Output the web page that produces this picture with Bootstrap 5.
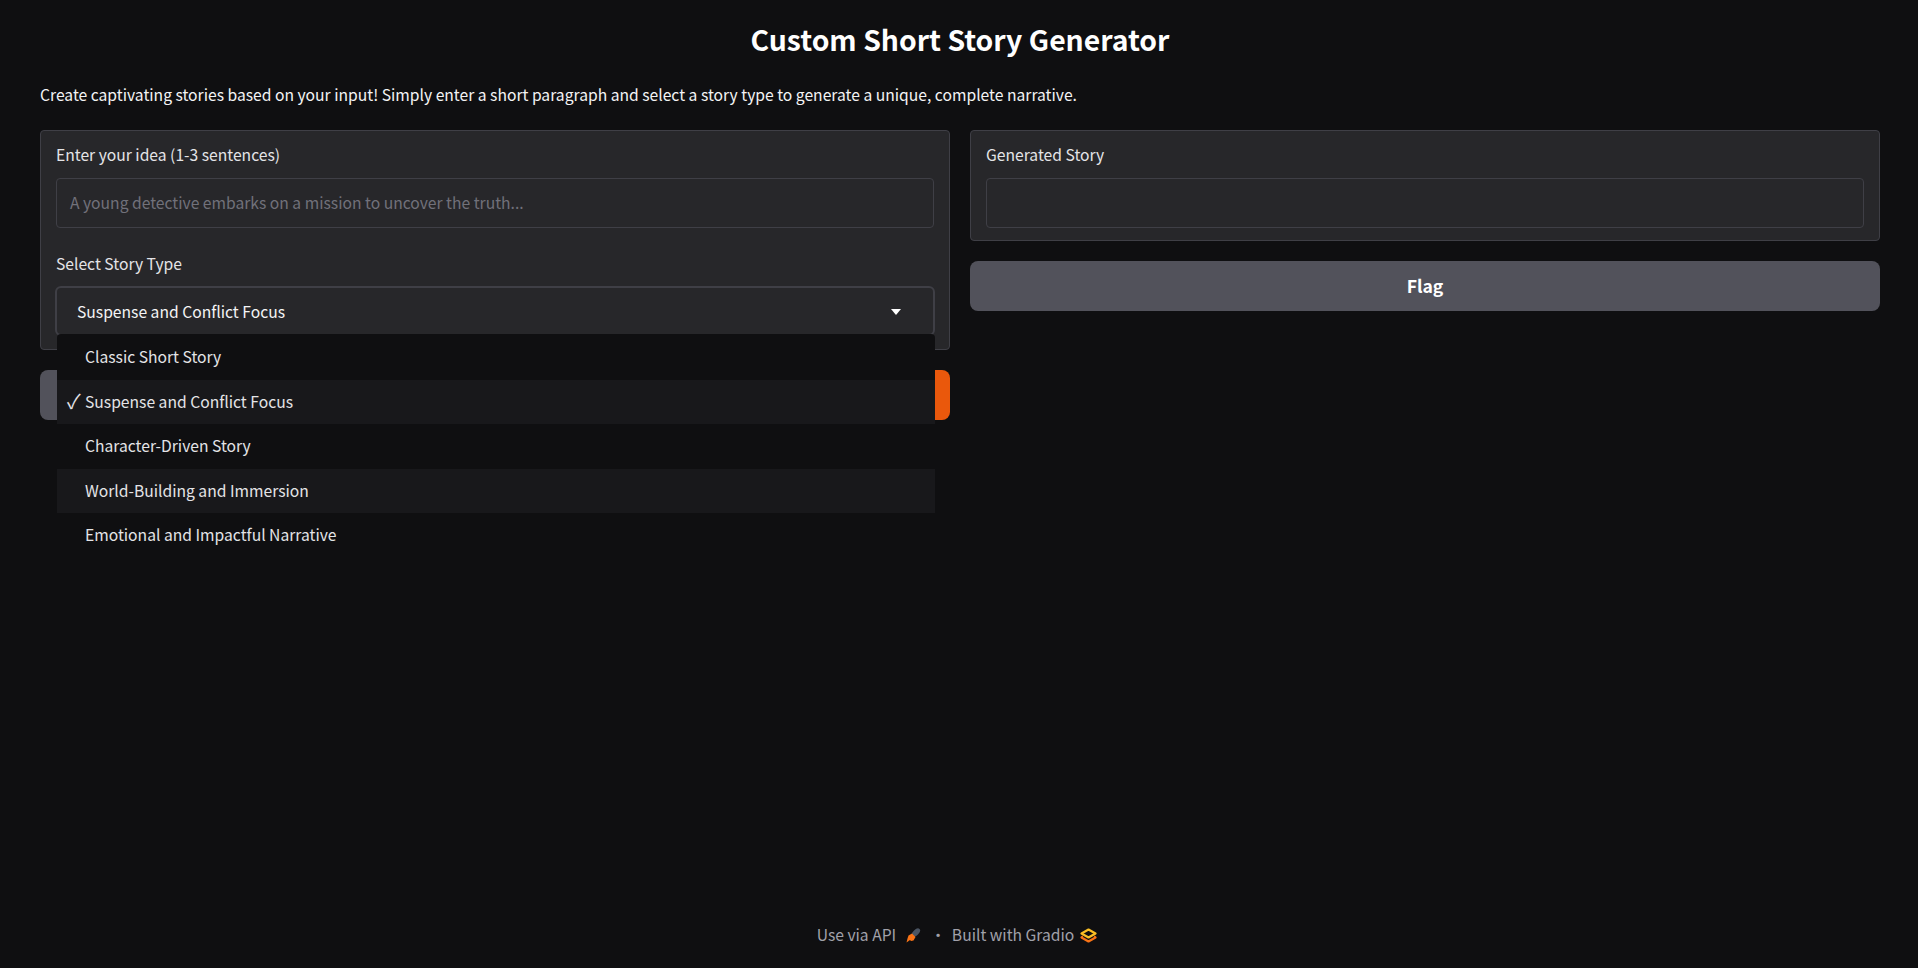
<!DOCTYPE html>
<html lang="en"><head><meta charset="utf-8"><title>Custom Short Story Generator</title>
<link href="https://cdn.jsdelivr.net/npm/bootstrap@5.3.0/dist/css/bootstrap.min.css" rel="stylesheet">
<style>
html,body{height:100%}
body{background:#0f0f11;color:#f4f4f5;font-family:"Noto Sans CJK SC","Source Sans Pro","Open Sans",sans-serif;font-size:15.67px;line-height:22px;overflow:hidden}
.app-shell{height:968px;padding:19px 38px 0 40px}
.app-title{font-size:28.35px;line-height:40px;font-weight:600;color:#fff;margin:0;text-align:center}
.app-desc{margin:24px 0 0;line-height:24px;color:#f4f4f5}
.cols{gap:20px;margin-top:23px}
.col-half{flex:1 1 0;min-width:0;gap:20px}
.panel{background:#27272a;border:1px solid #3f3f46;border-radius:4px;padding:0 15px}
.panel-left{height:220px;position:relative}
.panel-right{height:111px}
.fld-label{color:#e4e4e7;line-height:22px;margin-top:13px;margin-bottom:12px;display:block}
.fld-input{height:50px;background:#27272a;border:1px solid #3f3f46;border-radius:4px;padding:0 13px;line-height:48px;color:#71717a}
.sel-label{margin-top:25px;margin-bottom:11px}
.sel-box{height:50px;margin:0 -1px;border:2px solid #3f3f46;border-radius:6px;padding:2px 20px 0;color:#f4f4f5;line-height:22px}
.caret-tri{width:0;height:0;border-left:5.500px solid transparent;border-right:5.500px solid transparent;border-top:6px solid #fff;margin-right:12px}
.dd-menu{position:absolute;left:57px;top:334px;width:878px;background:#0f0f11;border-radius:4px 4px 0 0;z-index:5;list-style:none;margin:0;padding:1px 0 0}
.dd-menu li{height:44.6px;line-height:22px;padding:11px 0 0 28px;position:relative;color:#e4e4e7}
.dd-menu li.alt{background:#18181b}
.dd-check{position:absolute;left:10px;top:10px;font-size:20px}
.btn-pair{gap:16px}
.g-btn{height:50px;border:0;border-radius:8px;font-weight:600;font-size:17.6px;color:#fff;line-height:50px;padding:0;width:100%}
.g-btn:hover{color:#fff}
.g-gray,.g-gray:hover{background:#52525b}
.g-orange,.g-orange:hover{background:#ea580c}
.foot{position:absolute;left:0;right:4px;top:924px;color:#a1a1aa;line-height:22px}
.foot svg{display:block}
.foot-rocket{margin-left:9px}
.foot-dot{margin:0 6px 0 9px}
.foot-logo{margin-left:6px}
</style></head>
<body>
<div class="app-shell position-relative">
<h1 class="app-title">Custom Short Story Generator</h1>
<p class="app-desc">Create captivating stories based on your input! Simply enter a short paragraph and select a story type to generate a unique, complete narrative.</p>
<div class="d-flex cols">
  <div class="col-half d-flex flex-column">
    <div class="panel panel-left">
      <label class="fld-label">Enter your idea (1-3 sentences)</label>
      <div class="fld-input">A young detective embarks on a mission to uncover the truth...</div>
      <label class="fld-label sel-label">Select Story Type</label>
      <div class="sel-box d-flex align-items-center justify-content-between"><span>Suspense and Conflict Focus</span><span class="caret-tri"></span></div>
    </div>
    <div class="d-flex btn-pair">
      <button class="btn g-btn g-gray" aria-label="Clear"></button>
      <button class="btn g-btn g-orange" aria-label="Submit"></button>
    </div>
  </div>
  <div class="col-half d-flex flex-column">
    <div class="panel panel-right">
      <label class="fld-label">Generated Story</label>
      <div class="fld-input"></div>
    </div>
    <button class="btn g-btn g-gray">Flag</button>
  </div>
</div>
<ul class="dd-menu">
  <li>Classic Short Story</li>
  <li class="alt"><span class="dd-check">✓</span>Suspense and Conflict Focus</li>
  <li>Character-Driven Story</li>
  <li class="alt">World-Building and Immersion</li>
  <li>Emotional and Impactful Narrative</li>
</ul>
<div class="foot d-flex justify-content-center align-items-center">
  <span>Use via API</span>
  <svg class="foot-rocket" width="16" height="16" viewBox="0 0 16 16"><ellipse cx="11" cy="5.500" rx="5" ry="2.800" transform="rotate(-45 11 5.500)" fill="#4b5563"/><path d="M3.500 8.500 7 6.500 10.500 10 8.500 13.500 6 14 5 13 1.500 15.500 2.500 11.500z" fill="#f97316"/></svg>
  <span class="foot-dot">·</span>
  <span>Built with Gradio</span>
  <svg class="foot-logo" width="17" height="15" viewBox="0 0 17 15" fill="none" stroke-width="2.200" stroke-linejoin="round"><path d="M3 8.500 1.500 9.500 8.500 13.500 15.500 9.500 14 8.500" stroke="#f97316"/><path d="M8.500 1.500 15.500 5.500 8.500 9.500 1.500 5.500z" stroke="#fbbf24"/></svg>
</div>
</div>
<script src="https://cdn.jsdelivr.net/npm/bootstrap@5.3.0/dist/js/bootstrap.bundle.min.js"></script>
</body></html>
